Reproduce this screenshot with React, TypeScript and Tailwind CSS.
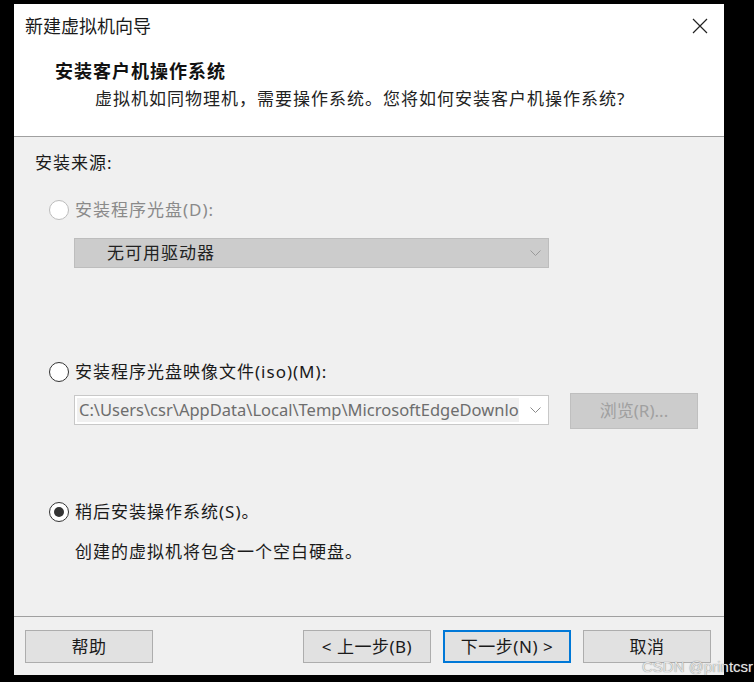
import React from "react";

const FONT = "font-['Noto_Sans','Noto_Sans_CJK_SC',sans-serif]";

const Radio = ({ checked, disabled }: { checked?: boolean; disabled?: boolean }) => (
  <span
    className={`flex h-[20px] w-[20px] shrink-0 items-center justify-center rounded-full border bg-white ${
      disabled ? "border-[#bcbcbc]" : "border-[#333333]"
    }`}
  >
    {checked && <span className="h-[10px] w-[10px] rounded-full bg-[#333333]" />}
  </span>
);

const Chevron = ({ color }: { color: string }) => (
  <svg width="11" height="6" viewBox="0 0 11 6" className="shrink-0">
    <path d="M0.5 0.5 L5.5 5.5 L10.5 0.5" fill="none" stroke={color} strokeWidth="1" />
  </svg>
);

const FooterButton = ({ label, focused }: { label: string; focused?: boolean }) => (
  <button
    className={`flex h-[33px] w-[128px] items-center justify-center bg-[#e1e1e1] text-[17px] tracking-[0.5px] text-[#1a1a1a] ${
      focused ? "border-2 border-[#0078d7]" : "border border-[#adadad]"
    }`}
  >
    {label}
  </button>
);

const App = () => {
  return (
    <div className={`relative h-[682px] w-[754px] overflow-hidden bg-black pl-[14px] pt-[4px] ${FONT}`}>
      <div className="flex h-[671px] w-[710px] flex-col bg-[#f0f0f0]">
        {/* header */}
        <div className="h-[133px] shrink-0 border-b border-[#a0a0a0] bg-white">
          <div className="flex h-[44px] items-center justify-between pl-[11px] pr-[16px]">
            <span className="text-[18px] text-[#1a1a1a]">新建虚拟机向导</span>
            <svg width="16" height="16" viewBox="0 0 16 16">
              <path d="M1 1 L15 15 M15 1 L1 15" stroke="#222" strokeWidth="1.2" />
            </svg>
          </div>
          <div className="ml-[41px] mt-[11px] text-[18px] font-bold leading-[24px] tracking-[1px] text-[#111]">
            安装客户机操作系统
          </div>
          <div className="ml-[81px] mt-[4px] text-[17px] leading-[24px] tracking-[1px] text-[#222]">
            虚拟机如同物理机，需要操作系统。您将如何安装客户机操作系统?
          </div>
        </div>

        {/* body */}
        <div className="flex flex-1 flex-col pl-[21px] text-[17px] tracking-[1px] text-[#1a1a1a]">
          <div className="mt-[15px] h-[22px] leading-[22px]">安装来源:</div>

          <div className="ml-[14px] mt-[25px] flex h-[22px] items-center gap-[6px]">
            <Radio disabled />
            <span className="text-[#8a8a8a]">安装程序光盘(D):</span>
          </div>

          <div className="ml-[39px] mt-[17px] flex h-[30px] w-[475px] items-center justify-between border border-[#bdbdbd] bg-[#cccccc] pl-[32px] pr-[7px]">
            <span className="text-[#222]">无可用驱动器</span>
            <Chevron color="#9a9a9a" />
          </div>

          <div className="ml-[14px] mt-[93px] flex h-[22px] items-center gap-[6px]">
            <Radio />
            <span>安装程序光盘映像文件(iso)(M):</span>
          </div>

          <div className="ml-[39px] mt-[10px] flex items-start tracking-normal">
            <div className="mt-[2px] flex h-[30px] w-[475px] items-center border border-[#c8c8c8] bg-white p-[2px] pr-[7px]">
              <div className="flex h-full w-[442px] items-center overflow-hidden whitespace-nowrap bg-[#f0f0f0] pl-[2px] text-[16.5px] text-[#6d6d6d]">
                C:\Users\csr\AppData\Local\Temp\MicrosoftEdgeDownlo
              </div>
              <div className="flex flex-1 justify-end">
                <Chevron color="#8a8a8a" />
              </div>
            </div>
            <div className="ml-[21px] flex h-[36px] w-[128px] items-center justify-center border border-[#bfbfbf] bg-[#cccccc] text-[#a0a0a0]">
              浏览(R)...
            </div>
          </div>

          <div className="ml-[14px] mt-[72px] flex h-[22px] items-center gap-[6px]">
            <Radio checked />
            <span>稍后安装操作系统(S)。</span>
          </div>

          <div className="ml-[40px] mt-[18px] h-[22px] leading-[22px]">创建的虚拟机将包含一个空白硬盘。</div>
        </div>

        {/* footer */}
        <div className="flex h-[59px] shrink-0 items-start border-t border-[#a0a0a0] pl-[11px] pt-[13px]">
          <FooterButton label="帮助" />
          <div className="ml-[150px] flex gap-[12px]">
            <FooterButton label="< 上一步(B)" />
            <FooterButton label="下一步(N) >" focused />
            <FooterButton label="取消" />
          </div>
        </div>
      </div>

      <div className="absolute left-[642px] top-[656px] text-[15px] text-[#e4e4e4] font-['Liberation_Sans',sans-serif] [text-shadow:0_0_1px_#666]">
        CSDN @printcsr
      </div>
    </div>
  );
};

export default App;
